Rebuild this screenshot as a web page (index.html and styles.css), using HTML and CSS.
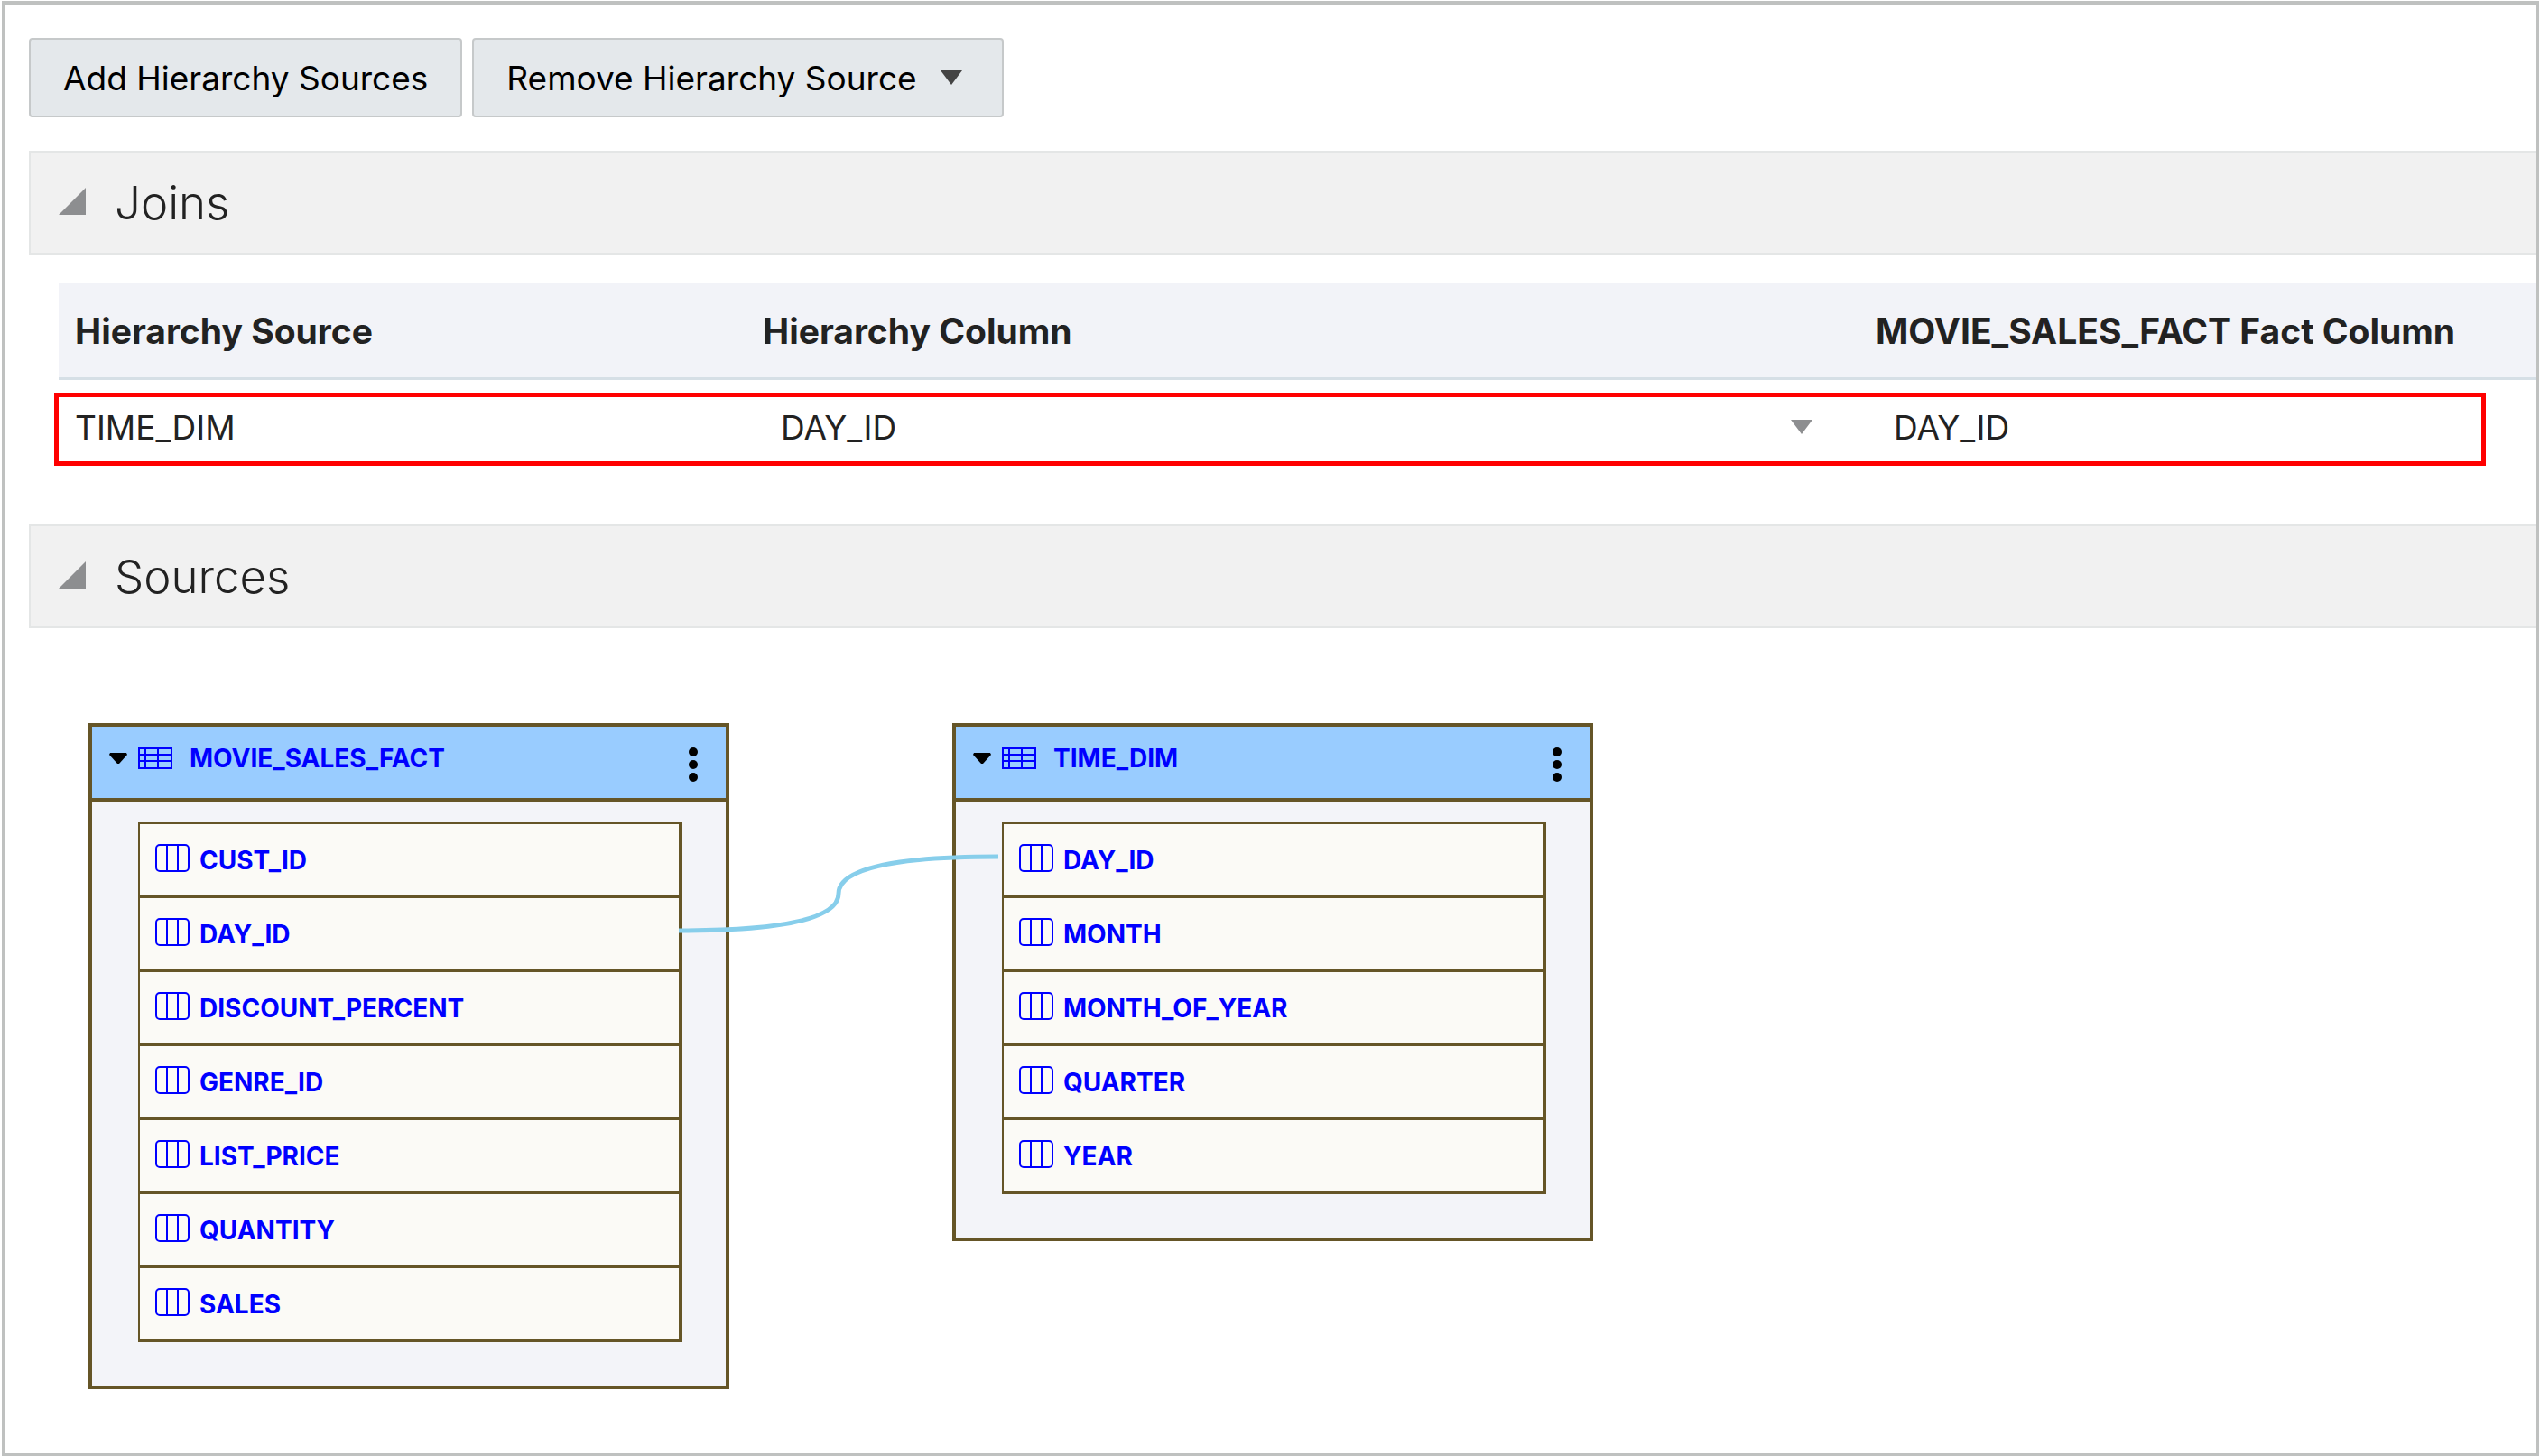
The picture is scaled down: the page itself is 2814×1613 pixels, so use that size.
FILE: index.html
```html
<!DOCTYPE html>
<html lang="en">
<head>
<meta charset="utf-8">
<title>Hierarchy Sources</title>
<link rel="stylesheet" href="styles.css">
</head>
<body>
<svg class="defs" aria-hidden="true">
  <symbol id="icon-table" viewBox="0 0 38 24">
    <path d="M1 1h36v22H1zM1 8h36M1 15h36M8 1v22M22 1v22" fill="none" stroke="#00f" stroke-width="2"/>
  </symbol>
  <symbol id="icon-column" viewBox="0 0 38 32">
    <rect x="1" y="1" width="36" height="29" rx="4" fill="none" stroke="#00f" stroke-width="2"/>
    <path d="M13 1v29M25 1v29" stroke="#00f" stroke-width="2"/>
  </symbol>
  <symbol id="icon-dots" viewBox="0 0 10 40">
    <circle cx="5" cy="6" r="5"/><circle cx="5" cy="20" r="5"/><circle cx="5" cy="34" r="5"/>
  </symbol>
  <symbol id="icon-caret" viewBox="0 0 20 12">
    <path d="M1 0h18l1 2-9 10h-2L0 2z"/>
  </symbol>
  <symbol id="icon-disclose" viewBox="0 0 30 30">
    <path d="M30 0v30H0z" fill="#8d8e90"/>
  </symbol>
</svg>
<main class="frame">
  <div class="toolbar">
    <button class="btn" type="button">Add Hierarchy Sources</button>
    <button class="btn btn-menu" type="button">Remove Hierarchy Source
      <svg class="btn-arrow" viewBox="0 0 24 16" aria-hidden="true"><path d="M0 0h24L12 16z" fill="#444"/></svg>
    </button>
  </div>

  <section class="section">
    <div class="section-head">
      <button class="disclose" type="button" aria-label="Collapse Joins"><svg><use href="#icon-disclose"/></svg></button>
      <h2 class="section-title">Joins</h2>
    </div>
    <div class="joins">
      <table class="join-table">
        <thead>
          <tr>
            <th class="col-source">Hierarchy Source</th>
            <th>Hierarchy Column</th>
            <th class="col-fact">MOVIE_SALES_FACT Fact Column</th>
          </tr>
        </thead>
        <tbody>
          <tr>
            <td>TIME_DIM</td>
            <td>
              <div class="picker">
                <select class="select" aria-label="Hierarchy Column"><option>DAY_ID</option></select>
                <svg class="picker-arrow" viewBox="0 0 24 16" aria-hidden="true"><path d="M0 0h24L12 16z" fill="#8d8e90"/></svg>
              </div>
            </td>
            <td><select class="select" aria-label="MOVIE_SALES_FACT Fact Column"><option>DAY_ID</option></select></td>
          </tr>
        </tbody>
      </table>
      <div class="highlight"></div>
    </div>
  </section>

  <section class="section">
    <div class="section-head">
      <button class="disclose" type="button" aria-label="Collapse Sources"><svg><use href="#icon-disclose"/></svg></button>
      <h2 class="section-title">Sources</h2>
    </div>
    <div class="diagram">
      <article class="node">
        <header class="node-head">
          <button class="node-toggle" type="button" aria-label="Collapse MOVIE_SALES_FACT"><svg><use href="#icon-caret"/></svg></button>
          <svg class="node-icon"><use href="#icon-table"/></svg>
          <h3 class="node-name">MOVIE_SALES_FACT</h3>
          <button class="node-menu" type="button" aria-label="MOVIE_SALES_FACT actions"><svg><use href="#icon-dots"/></svg></button>
        </header>
        <ul class="columns">
          <li class="column"><svg class="column-icon"><use href="#icon-column"/></svg><span>CUST_ID</span></li>
          <li class="column"><svg class="column-icon"><use href="#icon-column"/></svg><span>DAY_ID</span></li>
          <li class="column"><svg class="column-icon"><use href="#icon-column"/></svg><span>DISCOUNT_PERCENT</span></li>
          <li class="column"><svg class="column-icon"><use href="#icon-column"/></svg><span>GENRE_ID</span></li>
          <li class="column"><svg class="column-icon"><use href="#icon-column"/></svg><span>LIST_PRICE</span></li>
          <li class="column"><svg class="column-icon"><use href="#icon-column"/></svg><span>QUANTITY</span></li>
          <li class="column"><svg class="column-icon"><use href="#icon-column"/></svg><span>SALES</span></li>
        </ul>
      </article>
      <article class="node">
        <header class="node-head">
          <button class="node-toggle" type="button" aria-label="Collapse TIME_DIM"><svg><use href="#icon-caret"/></svg></button>
          <svg class="node-icon"><use href="#icon-table"/></svg>
          <h3 class="node-name">TIME_DIM</h3>
          <button class="node-menu" type="button" aria-label="TIME_DIM actions"><svg><use href="#icon-dots"/></svg></button>
        </header>
        <ul class="columns">
          <li class="column"><svg class="column-icon"><use href="#icon-column"/></svg><span>DAY_ID</span></li>
          <li class="column"><svg class="column-icon"><use href="#icon-column"/></svg><span>MONTH</span></li>
          <li class="column"><svg class="column-icon"><use href="#icon-column"/></svg><span>MONTH_OF_YEAR</span></li>
          <li class="column"><svg class="column-icon"><use href="#icon-column"/></svg><span>QUARTER</span></li>
          <li class="column"><svg class="column-icon"><use href="#icon-column"/></svg><span>YEAR</span></li>
        </ul>
      </article>
      <svg class="link" viewBox="0 0 354 88" aria-hidden="true">
        <path d="M0 85Q177 85 177 44Q177 3 354 3" fill="none" stroke="#87ceeb" stroke-width="5"/>
      </svg>
    </div>
  </section>
</main>
</body>
</html>
```
FILE: styles.css
```css
* { box-sizing: border-box; }

body {
  margin: 0;
  padding: 1px 1px 0 2px;
  background: #fff;
  color: #222;
  font-family: Inter, "Liberation Sans", sans-serif;
  font-size: 37px;
}

button {
  margin: 0;
  padding: 0;
  border: 0;
  background: none;
  font: inherit;
  color: inherit;
}

svg { display: block; }
.defs { display: none; }

.frame {
  min-height: calc(100vh - 1px);
  padding: 37px 0 0 27px;
  border: 3px solid #bfc1c0;
  border-top-width: 4px;
}

/* Toolbar */
.toolbar { display: flex; gap: 11px; }

.btn {
  display: flex;
  align-items: center;
  gap: 26px;
  height: 88px;
  padding: 0 36px;
  border: 2px solid #c6c9ca;
  border-radius: 4px;
  background: #e4e8eb;
  color: #000;
  white-space: nowrap;
}

.btn-menu { padding-right: 44px; }
.btn-arrow { width: 24px; height: 16px; }

/* Sections */
.section-head {
  display: flex;
  align-items: center;
  gap: 32px;
  height: 115px;
  padding-left: 31px;
  border: 2px solid #e4e6e6;
  border-right: 0;
  background: #f1f1f1;
}

.toolbar + .section { margin-top: 37px; }

.disclose { padding-bottom: 3px; }
.disclose svg { width: 30px; height: 30px; }

.section-title {
  margin: 0;
  font-size: 51px;
  font-weight: 300;
  line-height: 64px;
}

/* Join table */
.joins {
  position: relative;
  padding: 32px 0 64px 33px;
}

.join-table {
  width: 100%;
  border-spacing: 0;
  table-layout: fixed;
}

.join-table th {
  height: 107px;
  padding: 0 18px;
  border-bottom: 3px solid #d6dfe6;
  background: #f2f3f8;
  font-size: 39px;
  font-weight: 700;
  text-align: left;
  white-space: nowrap;
}

.join-table td {
  height: 96px;
  padding: 8px 18px 0;
}

.col-source { width: 762px; }
.col-fact { width: 750px; }

.picker { display: flex; align-items: center; padding-right: 34px; }
.picker-arrow { flex: none; width: 24px; height: 16px; }

.select {
  flex: 1;
  width: 100%;
  padding: 0 20px;
  border: 0;
  background: none;
  appearance: none;
  color: inherit;
  font: inherit;
}

.highlight {
  position: absolute;
  top: 153px;
  right: 56px;
  left: 28px;
  height: 81px;
  border: 5px solid #f00;
  pointer-events: none;
}

/* Source diagram */
.diagram {
  position: relative;
  display: flex;
  align-items: flex-start;
  gap: 247px;
  padding: 105px 0 66px 66px;
}

.node {
  width: 710px;
  border: 4px solid #655527;
  background: #f3f4f9;
  color: #00f;
}

.node-head {
  display: flex;
  align-items: center;
  height: 83px;
  padding: 0 31px 10px 19px;
  border-bottom: 4px solid #655527;
  background: #9cf;
}

.node-toggle { color: #000; }
.node-toggle svg { width: 20px; height: 12px; }
.node-icon { width: 38px; height: 24px; margin: 0 19px 0 12px; }

.node-name {
  flex: 1;
  margin: 0;
  font-size: 28px;
  font-weight: 700;
  line-height: 32px;
}

.node-menu { padding-top: 14px; color: #000; }
.node-menu svg { width: 10px; height: 40px; }

.columns {
  margin: 23px 48px 48px 51px;
  padding: 0;
  border: 2px solid #655527;
  border-right-width: 4px;
  border-bottom: 0;
  background: #fbfaf6;
  list-style: none;
}

.column {
  display: flex;
  align-items: center;
  gap: 11px;
  height: 82px;
  padding: 0 0 2px 17px;
  border-bottom: 4px solid #655527;
  font-size: 28px;
  font-weight: 700;
  line-height: 32px;
}

.column span { padding-top: 4px; }
.column-icon { width: 38px; height: 32px; }

.link {
  position: absolute;
  top: 250px;
  left: 720px;
  width: 354px;
  height: 88px;
}
```
